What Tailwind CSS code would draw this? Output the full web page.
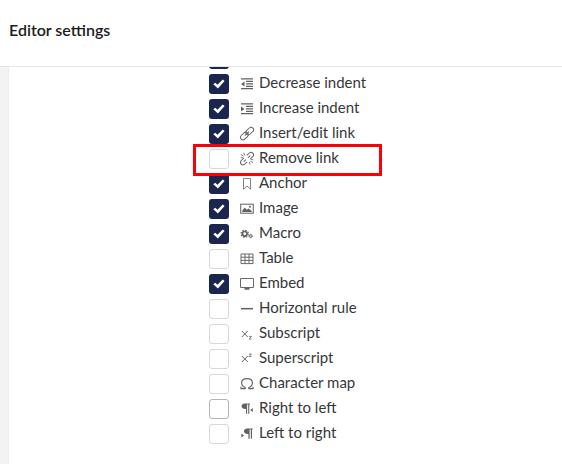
<!DOCTYPE html>
<html lang="en"><head><meta charset="utf-8"><title>Editor settings</title>
<script src="https://cdn.jsdelivr.net/npm/@tailwindcss/browser@4"></script></head>
<body class="w-[562px] h-[464px] overflow-hidden bg-white font-['Lato',sans-serif] text-[15px] text-[#37373a]">
<div class="flex flex-col h-full">
<header class="h-[67px] shrink-0 border-b border-[#e4e3e5] pl-[9px] pt-[20px]"><h1 class="leading-5 font-semibold text-[16px] text-[#1b1b1d]">Editor settings</h1></header>
<main class="flex-1 flex min-h-0">
<div class="w-[9px] shrink-0 bg-[#f4f3f4] border-r border-[#efeeef]"></div>
<div class="relative flex-1 overflow-hidden pl-[200px]">
<ul id="list" class="-mt-[18px] flex flex-col gap-[5px]"></ul>
<div class="absolute left-[184px] top-[77px] w-[189px] h-[32px] border-3 border-[#fb0007]"></div>
</div></main></div>
<script>
const rows = [
 ['', 1, ''],
 ['Decrease indent', 1, '<path d="M1 4.9h12M6 7.4h7M6 9.9h7M6 12.4h7M1 14.7h12" stroke-width="1.3"/><path d="M4.5 7.4v5L1 9.9z" fill="currentColor" stroke="none"/>'],
 ['Increase indent', 1, '<path d="M1 4.9h12M6 7.4h7M6 9.9h7M6 12.4h7M1 14.7h12" stroke-width="1.3"/><path d="M1 7.4v5l3.5-2.5z" fill="currentColor" stroke="none"/>'],
 ['Insert/edit link', 1, '<g transform="rotate(-43 7 9.6)" stroke-width=".95"><rect x="-1" y="7.1" width="8.8" height="5" rx="2.5"/><rect x="6.2" y="7.1" width="8.8" height="5" rx="2.5"/><path d="M4 9.6h6"/></g>'],
 ['Remove link', 0, '<g transform="rotate(-43 7 9.6)" stroke-width=".95"><path d="M5 7.1H1.5a2.5 2.5 0 0 0 0 5H5M9 7.1h3.5a2.5 2.5 0 0 1 0 5H9M2.5 9.6h3M8.5 9.6h3"/></g><path d="M.8 5.5l2.7 1.5M3.7 3.8l1.1 2.7M.8 8.7h2.4M10.5 12.3l2.5 1.3M9.3 13l1 2.5M10.9 10.7h2.4" stroke-width=".85"/>'],
 ['Anchor', 1, '<path d="M3.5 4.5h7v10.7L7 12l-3.5 3.2z" stroke-width=".8"/>'],
 ['Image', 1, '<rect x=".7" y="5.2" width="12.6" height="9"/><path d="M2.3 12.9v-1.5l2.5-3 2 2.3 1.7-1.2 3.2 2.4v1z" fill="currentColor" stroke="none"/><circle cx="10" cy="7.7" r="1" fill="currentColor" stroke="none"/>'],
 ['Macro', 1, '<circle cx="4.7" cy="9.8" r="2.3" stroke-width="1.7"/><circle cx="4.7" cy="9.8" r="3.6" stroke-width="1.2" stroke-dasharray="1.5 1.327"/><circle cx="10.7" cy="12.1" r="1.2"/><circle cx="10.7" cy="12.1" r="1.9" stroke-width=".8" stroke-dasharray=".8 .69"/>'],
 ['Table', 0, '<path d="M1 5h12v9.6H1zM1 8.2h12M1 11.4h12M5 5v9.6M9 5v9.6" stroke-width=".95"/>'],
 ['Embed', 1, '<path d="M.5 4.5h13v9H.5z" stroke-width=".95"/><path d="M4.5 14h5v1.7h-5z" fill="currentColor" stroke="none"/>'],
 ['Horizontal rule', 0, '<path d="M1 9.7h12" stroke-width="1.5"/>'],
 ['Subscript', 0, '<path d="M1.8 7l6 6M7.8 7l-6 6" stroke-width="1"/><path d="M9 12.4h2.5L9 15h2.6" stroke-width=".8"/>'],
 ['Superscript', 0, '<path d="M1.8 7l6 6M7.8 7l-6 6" stroke-width="1"/><path d="M9 5h2.5L9 7.6h2.6" stroke-width=".8"/>'],
 ['Character map', 0, '<path d="M1 12.8v1.8h4.2v-1C-.1 10.8.5 4.6 7 4.6s7.1 6.2 1.8 9v1H13v-1.8" stroke-width="1.15"/>'],
 ['Right to left', 0, '<path d="M4.8 4.5H10v1H9.3v9.2H8.2V5.5H7.1v9.2H6v-4.6C.3 10.4.3 4.5 4.8 4.5zM12.8 9v4L10.2 11z" fill="currentColor" stroke="none"/>'],
 ['Left to right', 0, '<path d="M7.2 4.5H12.8v1H12v9.2h-1.2V5.5H9.6v9.2H8.4v-4.6C2.7 10.4 2.7 4.5 7.2 4.5zM1.3 9.5v4l2.8-2z" fill="currentColor" stroke="none"/>']
];
const check = '<svg class="w-5 h-5" viewBox="0 0 20 20" fill="#fff"><path d="M4.3 10.2L6.2 8.7l2.3 2.1 5.2-5.2 1.9 1.3-6.7 7.7z"/></svg>';
document.getElementById('list').innerHTML = rows.map(([name,on,icon]) => `<li class="flex h-5 items-center whitespace-nowrap">
<span class="w-5 h-5 shrink-0 rounded-[3px] ${on ? 'bg-[#1b264f]' : name === 'Right to left' ? 'border border-[#b4b3b6]' : 'border border-[#d8d7d9]'}">${on ? check : ''}</span>
<svg class="ml-[11px] mr-[5px] w-[14px] h-5 shrink-0 text-[#626264]" viewBox="0 0 14 20" fill="none" stroke="currentColor">${icon}</svg>
<span class="-mt-1 leading-5">${name}</span></li>`).join('');
</script>
</body></html>
